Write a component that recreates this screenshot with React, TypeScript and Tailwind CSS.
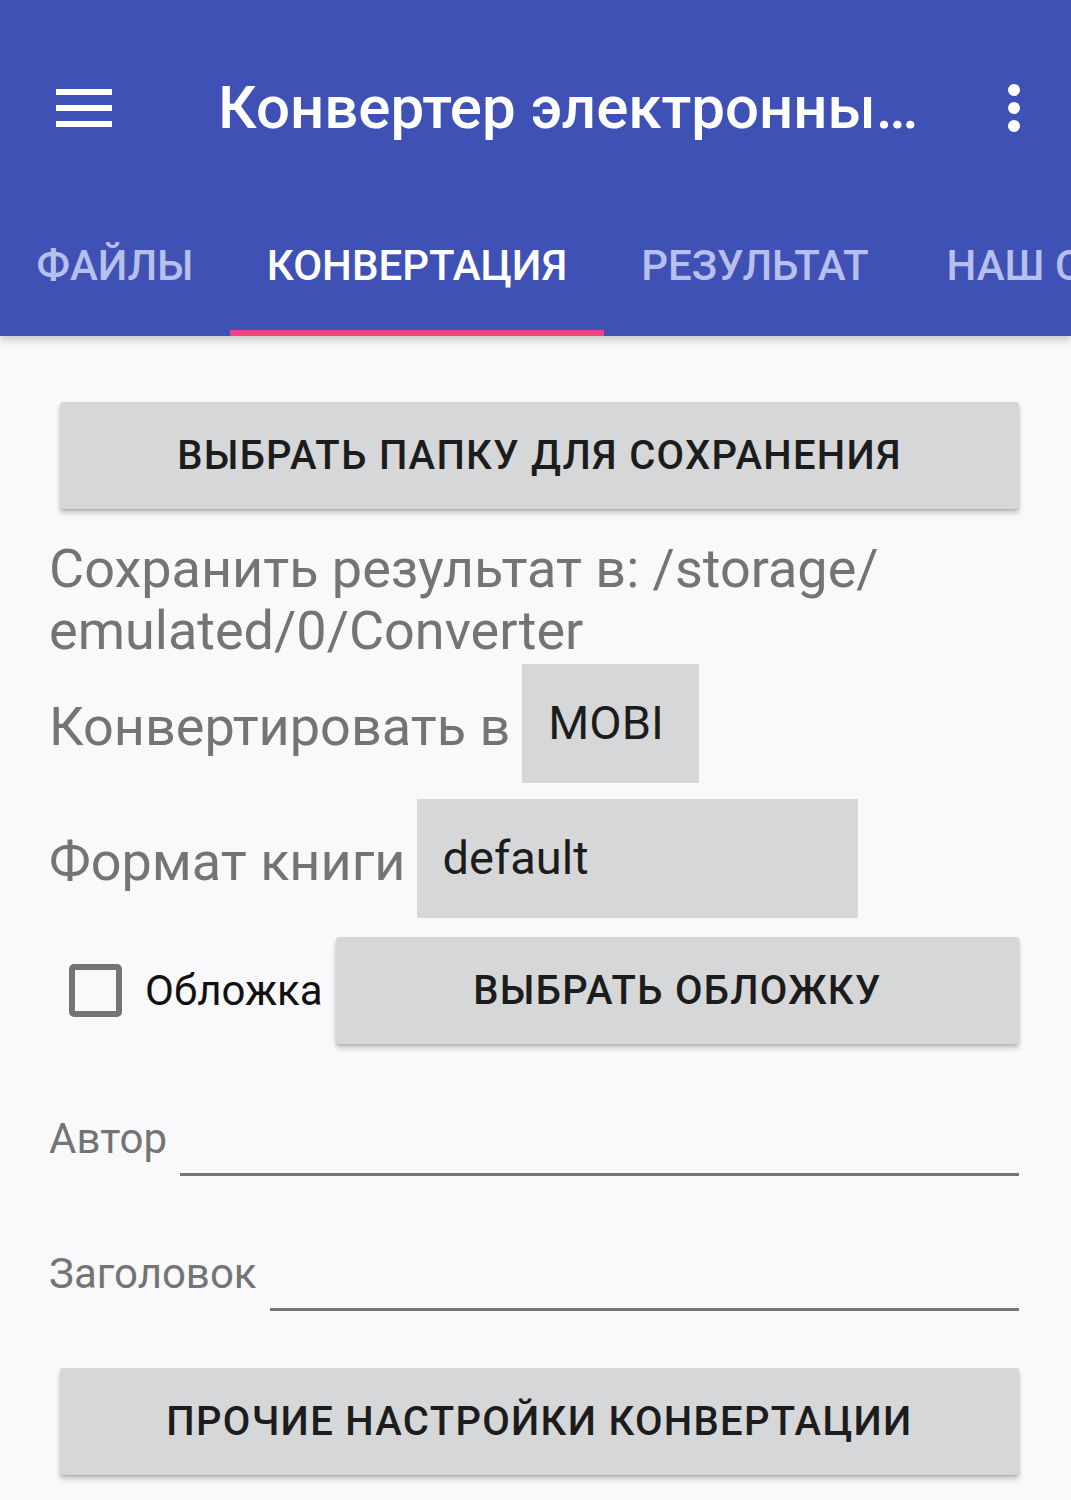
import React from "react";

const font = { fontFamily: "Roboto, 'Noto Sans', sans-serif" };

function Hamburger() {
  return (
    <div className="flex flex-col gap-[10px] w-[56px]">
      <span className="block h-[6px] bg-white" />
      <span className="block h-[6px] bg-white" />
      <span className="block h-[6px] bg-white" />
    </div>
  );
}

function Kebab() {
  return (
    <div className="flex flex-col items-center gap-[6px]">
      <span className="block w-[12px] h-[12px] rounded-full bg-white" />
      <span className="block w-[12px] h-[12px] rounded-full bg-white" />
      <span className="block w-[12px] h-[12px] rounded-full bg-white" />
    </div>
  );
}

function RaisedButton({ label, className = "" }: { label: string; className?: string }) {
  return (
    <button
      className={`h-[107px] bg-[#d6d7d9] rounded-[3px] shadow-[0_4px_5px_rgba(0,0,0,0.22),0_1px_2px_rgba(0,0,0,0.12)] flex items-center justify-center text-[40px] tracking-[1.3px] font-medium text-[#1c1c1c] uppercase ${className}`}
    >
      {label}
    </button>
  );
}

function LineField({ label }: { label: string }) {
  return (
    <div className="flex items-end">
      <span className="text-[42px] leading-[50px] pb-[12px] text-[#747474]">{label}</span>
      <div className="flex-1 ml-[13px] h-[3px] bg-[#747474]" />
    </div>
  );
}

export default function App() {
  const tabs = [
    { name: "Файлы", w: "w-[230px]", active: false },
    { name: "Конвертация", w: "w-[374px]", active: true },
    { name: "Результат", w: "w-[302px]", active: false },
    { name: "Наш сайт", w: "w-[300px]", active: false },
  ];

  return (
    <div className="w-[1071px] h-[1500px] bg-[#f9f9fb] overflow-hidden" style={font}>
      {/* app bar */}
      <header className="bg-[#3f51b5] shadow-[0_4px_8px_rgba(0,0,0,0.2)] relative z-10">
        <div className="h-[216px] flex items-center pl-[56px] pr-[51px]">
          <Hamburger />
          <h1 className="ml-[106px] flex-1 text-[60px] leading-none font-medium text-white whitespace-nowrap">
            Конвертер электронны…
          </h1>
          <Kebab />
        </div>
        <nav className="h-[120px] flex overflow-hidden">
          {tabs.map((t) => (
            <div
              key={t.name}
              className={`${t.w} shrink-0 relative flex justify-center items-center pb-[22px]`}
            >
              <span
                className={`text-[42px] font-medium uppercase whitespace-nowrap ${
                  t.active ? "text-white" : "text-[#b7bfec]"
                }`}
              >
                {t.name}
              </span>
              {t.active && <span className="absolute left-0 right-0 bottom-0 h-[6px] bg-[#ee4582]" />}
            </div>
          ))}
        </nav>
      </header>

      {/* content */}
      <main className="pl-[49px] pr-[52px] pt-[66px] flex flex-col">
        <RaisedButton label="Выбрать папку для сохранения" className="ml-[11px]" />

        <p className="mt-[29px] text-[54px] leading-[62px] text-[#747474]">
          Сохранить результат в: /storage/
          <br />
          emulated/0/Converter
        </p>

        <div className="flex items-center mt-[2px]">
          <span className="text-[54px] leading-[62px] text-[#747474] pt-[6px]">Конвертировать в</span>
          <div className="ml-[12px] w-[177px] h-[119px] bg-[#d6d7d9] flex items-center pl-[26px] text-[47px] text-[#1c1c1c]">
            MOBI
          </div>
        </div>

        <div className="flex items-center mt-[16px]">
          <span className="text-[54px] leading-[62px] text-[#747474] pt-[6px]">Формат книги</span>
          <div className="ml-[11px] w-[441px] h-[119px] bg-[#d6d7d9] flex items-center pl-[26px] text-[47px] text-[#1c1c1c]">
            default
          </div>
        </div>

        <div className="flex items-center mt-[19px]">
          <span className="ml-[20px] w-[53px] h-[53px] rounded-[5px] border-[6px] border-[#747474] shrink-0" />
          <span className="ml-[23px] text-[42px] text-[#111]">Обложка</span>
          <RaisedButton label="Выбрать обложку" className="ml-[13px] flex-1" />
        </div>

        <div className="mt-[70px]">
          <LineField label="Автор" />
        </div>
        <div className="mt-[73px]">
          <LineField label="Заголовок" />
        </div>

        <RaisedButton label="Прочие настройки конвертации" className="ml-[11px] mt-[57px]" />
      </main>
    </div>
  );
}
